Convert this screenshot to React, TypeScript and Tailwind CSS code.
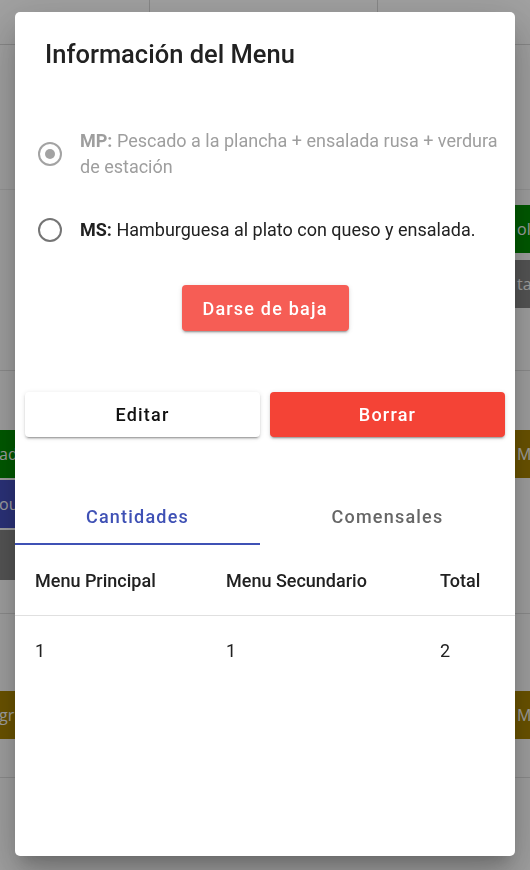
const font = { fontFamily: "Roboto, 'Liberation Sans', sans-serif" };

function LeftChip({ color, text }: { color: string; text: string }) {
  return (
    <div className={`h-[48px] flex items-center overflow-hidden text-white text-[16px] -ml-[1px] ${color}`}>
      {text}
    </div>
  );
}

function RightChip({ color, text }: { color: string; text: string }) {
  return (
    <div className={`h-[48px] flex items-center overflow-hidden whitespace-nowrap text-white text-[16px] pl-[139px] ${color}`}>
      {text}
    </div>
  );
}

// Página de fondo (queda atenuada por el backdrop del diálogo)
function BackgroundPage() {
  return (
    <div className="w-[530px] h-[870px] overflow-hidden bg-white" style={{ fontFamily: "'Open Sans', sans-serif" }}>
      <div className="grid grid-cols-[150px_228px_152px] h-[45px] border-b border-[#d8d8d8]">
        <div className="border-r border-[#d8d8d8]" />
        <div className="border-r border-[#d8d8d8]" />
        <div />
      </div>
      <div className="h-[145px] border-b border-[#ececec]" />
      <div className="grid grid-cols-[150px_228px_152px] h-[181px] border-b border-[#e0e0e0]">
        <div />
        <div />
        <div className="flex flex-col gap-[7px] pt-[15px]">
          <RightChip color="bg-[#008f00]" text="olla" />
          <RightChip color="bg-[#878787]" text="tas" />
        </div>
      </div>
      <div className="grid grid-cols-[150px_228px_152px] h-[243px] border-b border-[#e0e0e0]">
        <div className="flex flex-col gap-[2px] pt-[59px] w-[120px]">
          <LeftChip color="bg-[#008f00]" text="ada" />
          <LeftChip color="bg-[#4550c2]" text="ou" />
          <div className="h-[50px] bg-[#878787]" />
        </div>
        <div />
        <div className="pt-[59px]">
          <RightChip color="bg-[#aa8500]" text="Menú" />
        </div>
      </div>
      <div className="grid grid-cols-[150px_228px_152px] h-[164px] border-b border-[#e0e0e0]">
        <div className="pt-[77px] w-[120px]">
          <LeftChip color="bg-[#aa8500]" text="gr" />
        </div>
        <div />
        <div className="pt-[77px]">
          <RightChip color="bg-[#aa8500]" text="Menú" />
        </div>
      </div>
    </div>
  );
}

function Radio({ checked, disabled }: { checked?: boolean; disabled?: boolean }) {
  const ring = disabled ? "border-[#a3a3a3]" : "border-[#757575]";
  return (
    <span className={`w-[24px] h-[24px] shrink-0 rounded-full border-[2px] flex items-center justify-center ${ring}`}>
      {checked && <span className="w-[10px] h-[10px] rounded-full bg-[#a3a3a3]" />}
    </span>
  );
}

const btnShadow =
  "shadow-[0_3px_1px_-2px_rgba(0,0,0,0.2),0_2px_2px_0_rgba(0,0,0,0.14),0_1px_5px_0_rgba(0,0,0,0.12)]";

export default function App() {
  return (
    <div className="relative w-[530px] h-[870px] overflow-hidden">
      <BackgroundPage />

      {/* Backdrop + diálogo */}
      <div className="fixed inset-0 bg-black/[0.37] flex pl-[15px] pt-[12px] pb-[14px]" style={font}>
        <div className="w-[500px] flex-none flex flex-col bg-white rounded-[5px] pt-[26px] shadow-[0_11px_15px_-7px_rgba(0,0,0,0.2),0_24px_38px_3px_rgba(0,0,0,0.14),0_9px_46px_8px_rgba(0,0,0,0.12)]">
          <h2 className="px-[30px] text-[25.5px] leading-[32px] font-medium text-[#212121]">
            Información del Menu
          </h2>

          <div className="mt-[58px] pl-[23px] flex flex-col gap-[37px]">
            <div className="flex items-center gap-[18px]">
              <Radio checked disabled />
              <p className="w-[428px] text-[18px] leading-[26px] text-[#9e9e9e]">
                <b className="font-bold">MP:</b> Pescado a la plancha + ensalada rusa + verdura de estación
              </p>
            </div>
            <div className="flex items-center gap-[18px]">
              <Radio />
              <p className="w-[428px] text-[18px] leading-[26px] text-[#212121]">
                <b className="font-bold">MS:</b> Hamburguesa al plato con queso y ensalada.
              </p>
            </div>
          </div>

          <div className="mt-[42px] flex justify-center">
            <button
              className={`w-[167px] h-[46px] rounded-[4px] bg-[#f65d55] text-white text-[18px] font-medium tracking-[1.2px] ${btnShadow}`}
            >
              Darse de baja
            </button>
          </div>

          <div className="mt-[61px] px-[10px] flex gap-[10px]">
            <button
              className={`flex-1 h-[45px] rounded-[4px] bg-white text-[#111] text-[18px] font-medium tracking-[1.2px] ${btnShadow}`}
            >
              Editar
            </button>
            <button
              className={`flex-1 h-[45px] rounded-[4px] bg-[#f44336] text-white text-[18px] font-medium tracking-[1.2px] ${btnShadow}`}
            >
              Borrar
            </button>
          </div>

          {/* Pestañas */}
          <div className="mt-[52px] flex h-[56px]">
            <div className="w-[245px] flex flex-col">
              <div className="flex-1 flex items-center justify-center text-[18px] font-medium tracking-[1.2px] text-[#3f51b5]">
                Cantidades
              </div>
              <div className="h-[2px] bg-[#3f51b5]" />
            </div>
            <div className="flex-1 flex items-center justify-center pb-[2px] text-[18px] font-medium tracking-[1.2px] text-[#666666]">
              Comensales
            </div>
          </div>

          {/* Tabla */}
          <div className="grid grid-cols-[191px_214px_1fr] h-[71px] items-center border-b border-[#e0e0e0] text-[18px] font-medium text-[#212121]">
            <div className="pl-[20px]">Menu Principal</div>
            <div className="pl-[20px]">Menu Secundario</div>
            <div className="pl-[20px]">Total</div>
          </div>
          <div className="grid grid-cols-[191px_214px_1fr] h-[68px] items-center text-[18px] text-[#212121]">
            <div className="pl-[20px]">1</div>
            <div className="pl-[20px]">1</div>
            <div className="pl-[20px]">2</div>
          </div>
        </div>
      </div>
    </div>
  );
}
